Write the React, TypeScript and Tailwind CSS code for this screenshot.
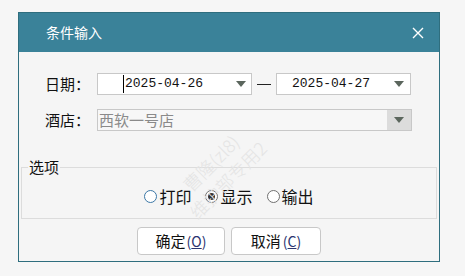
import React from "react";

const CJK = "font-['Microsoft_YaHei','Noto_Sans_CJK_SC',sans-serif]";

function Caret() {
  return (
    <svg width="10" height="6" viewBox="0 0 10 6" className="shrink-0">
      <path d="M0 0 H10 L5 6 Z" fill="#5b665d" />
    </svg>
  );
}

function Radio({ label, checked, focus }: { label: string; checked?: boolean; focus?: boolean }) {
  return (
    <label className="flex items-center gap-[2px]">
      <span
        className={`flex h-[13px] w-[13px] items-center justify-center rounded-full border bg-white ${
          focus ? "border-[#3b77a6]" : "border-[#707070]"
        }`}
      >
        {checked && <span className="h-[7px] w-[7px] rounded-full bg-[#333]" />}
      </span>
      <span className="text-[16px] text-[#111]">{label}</span>
    </label>
  );
}

export default function App() {
  return (
    <div className={`relative h-[276px] w-[465px] bg-[#f6f6f6] pl-[18px] pt-[12px] ${CJK}`}>
      <div className="flex h-[250px] w-[422px] flex-col border border-[#2f6e7e] bg-[#f5f5f5]">
        {/* title bar */}
        <div className="flex h-[39px] shrink-0 items-center justify-between bg-[#3a8299] pl-[27px] pr-[15px]">
          <span className="text-[14px] text-white">条件输入</span>
          <svg width="12" height="12" viewBox="0 0 12 12">
            <path d="M1 1 L11 11 M11 1 L1 11" stroke="#fff" strokeWidth="1.4" />
          </svg>
        </div>

        <div className="flex flex-col px-[26px] pt-[21px]">
          {/* date row */}
          <div className="flex h-[22px] items-center">
            <span className="w-[52px] text-[15px] text-[#111]">日期：</span>
            <div className="flex h-[22px] w-[155px] items-center justify-between border border-[#c8c8c8] bg-white pl-[25px] pr-[5px]">
              <span className="flex items-center font-['Liberation_Mono',monospace] text-[13px] text-[#111]">
                <span className="mr-[1px] h-[18px] w-[1px] bg-black" />
                2025-04-26
              </span>
              <Caret />
            </div>
            <span className="mx-[5px] h-[1px] w-[14px] bg-[#222]" />
            <div className="flex h-[22px] w-[135px] items-center justify-between border border-[#c8c8c8] bg-white pl-[15px] pr-[6px]">
              <span className="font-['Liberation_Mono',monospace] text-[13px] text-[#111]">2025-04-27</span>
              <Caret />
            </div>
          </div>

          {/* hotel row */}
          <div className="mt-[14px] flex h-[22px] items-center">
            <span className="w-[52px] text-[15px] text-[#111]">酒店：</span>
            <div className="flex h-[22px] w-[315px] items-stretch border border-[#c8c8c8] bg-[#f7f7f7]">
              <span className="flex-1 pl-[1px] text-[15px] leading-[20px] text-[#8a8a8a]">西软一号店</span>
              <span className="flex w-[24px] items-center justify-center bg-[#dcdcdc]">
                <Caret />
              </span>
            </div>
          </div>
        </div>

        {/* group box */}
        <div className="relative mx-[2px] mt-[36px] h-[52px] border border-[#dcdcdc]">
          <span className="absolute -top-[11px] left-[6px] bg-[#f5f5f5] px-[1px] text-[15px] leading-[20px] text-[#111]">
            选项
          </span>
          <div className="flex h-full items-center justify-center gap-[14px] pt-[6px]">
            <Radio label="打印" focus />
            <Radio label="显示" checked />
            <Radio label="输出" />
          </div>
        </div>

        {/* buttons */}
        <div className="mt-[8px] flex justify-center gap-[6px]">
          <button className="flex h-[28px] w-[88px] items-center justify-center rounded-[4px] border border-[#c8c8c8] bg-white text-[15px] text-[#111]">
            确定<span className="ml-[1px] text-[14px] text-[#2a3470]">(<span className="underline">O</span>)</span>
          </button>
          <button className="flex h-[28px] w-[90px] items-center justify-center rounded-[4px] border border-[#c8c8c8] bg-white text-[15px] text-[#111]">
            取消<span className="ml-[2px] text-[14px] text-[#2a3470]">(<span className="underline">C</span>)</span>
          </button>
        </div>
      </div>

      {/* watermark */}
      <div className="pointer-events-none absolute left-[149px] top-[147px] w-[140px] -rotate-45 text-center text-[18px] font-light leading-[24px] text-[#e4e4e4]">
        <div>曹隆(zl8)</div>
        <div>维护部专用2</div>
      </div>
    </div>
  );
}
